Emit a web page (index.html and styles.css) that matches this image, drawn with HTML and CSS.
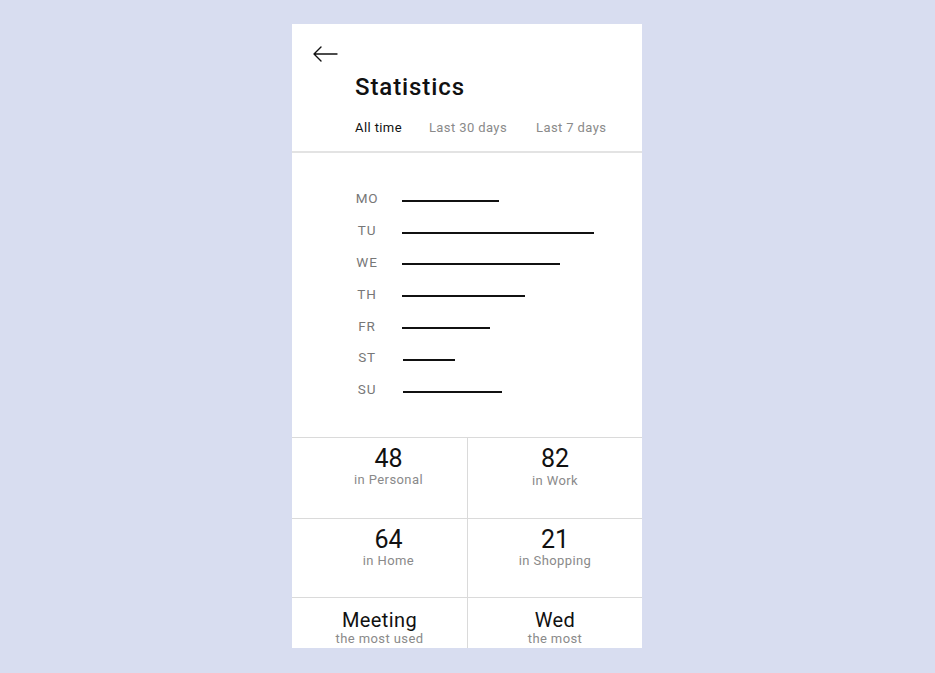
FILE: index.html
```html
<!DOCTYPE html>
<html>
<head>
<meta charset="utf-8">
<link rel="stylesheet" href="styles.css">
</head>
<body>
<div class="card">
  <header class="header">
    <svg class="back" width="28" height="20" viewBox="0 0 28 20">
      <path d="M26 10H3M10 3L3 10L10 17" fill="none" stroke="#111" stroke-width="1.4" stroke-linecap="round" stroke-linejoin="round"/>
    </svg>
    <h1 class="title">Statistics</h1>
    <nav class="tabs">
      <span class="tab active">All time</span>
      <span class="tab">Last 30 days</span>
      <span class="tab">Last 7 days</span>
    </nav>
  </header>
  <section class="chart">
    <div class="row"><span class="day">MO</span><span class="bar" style="width:97px"></span></div>
    <div class="row"><span class="day">TU</span><span class="bar" style="width:192px"></span></div>
    <div class="row"><span class="day">WE</span><span class="bar" style="width:158px"></span></div>
    <div class="row"><span class="day">TH</span><span class="bar" style="width:123px"></span></div>
    <div class="row"><span class="day">FR</span><span class="bar" style="width:88px"></span></div>
    <div class="row"><span class="day">ST</span><span class="bar shift" style="width:52px"></span></div>
    <div class="row"><span class="day">SU</span><span class="bar shift" style="width:99px"></span></div>
  </section>
  <section class="grid">
    <div class="cell r1 left"><div class="num">48</div><div class="lbl">in Personal</div></div>
    <div class="cell r1"><div class="num">82</div><div class="lbl low">in Work</div></div>
    <div class="cell r2 left"><div class="num">64</div><div class="lbl">in Home</div></div>
    <div class="cell r2"><div class="num">21</div><div class="lbl">in Shopping</div></div>
    <div class="cell r3"><div class="word">Meeting</div><div class="lbl tight">the most used</div></div>
    <div class="cell r3"><div class="word">Wed</div><div class="lbl tight">the most</div></div>
  </section>
</div>
</body>
</html>
```

FILE: styles.css
```css
* { box-sizing: border-box; }
html, body { margin: 0; padding: 0; }
body {
  background: #d8ddf0;
  font-family: Roboto, "Noto Sans", "Liberation Sans", sans-serif;
  width: 935px;
  height: 673px;
  overflow: hidden;
}
.card {
  margin: 24px 0 0 292px;
  width: 350px;
  height: 624px;
  background: #fff;
  overflow: hidden;
  display: flex;
  flex-direction: column;
}
.header {
  flex-shrink: 0;
  height: 129px;
  border-bottom: 2px solid #e3e3e3;
  padding: 20px 0 0 0;
  display: flex;
  flex-direction: column;
}
.back {
  margin-left: 19px;
  display: block;
}
.title {
  margin: 9px 0 0 63px;
  font-size: 24px;
  font-weight: 500;
  letter-spacing: 0.9px;
  line-height: 28px;
  color: #111;
}
.tabs {
  margin: 19px 0 0 63px;
  display: flex;
  gap: 27px;
  font-size: 13px;
  line-height: 16px;
  letter-spacing: 0.4px;
  color: #8a8a8a;
}
.tab.active { color: #111; }
.tabs .tab:last-child { margin-left: 2px; }

.chart {
  flex-shrink: 0;
  height: 284px;
  padding: 29.5px 0 0 0;
  display: flex;
  flex-direction: column;
}
.row {
  height: 31.8px;
  flex-shrink: 0;
  display: flex;
  align-items: center;
}
.day {
  width: 24px;
  margin-left: 63px;
  text-align: center;
  font-size: 13.5px;
  letter-spacing: 0.8px;
  color: #777;
}
.bar {
  height: 2px;
  background: #111;
  margin-left: 23px;
  margin-top: 5px;
}
.bar.shift { margin-left: 24px; }

.grid {
  flex-shrink: 0;
  display: grid;
  grid-template-columns: 176px 174px;
  grid-template-rows: 81px 79px 60px;
  border-top: 1px solid #dadada;
}
.cell {
  display: flex;
  flex-direction: column;
  align-items: center;
  padding-top: 7px;
  border-bottom: 1px solid #dadada;
}
.cell:nth-child(odd) { border-right: 1px solid #dadada; }
.cell.left { padding-left: 18px; }
.cell.r3 { padding-top: 10px; border-bottom: none; }
.num {
  font-size: 25px;
  line-height: 28px;
  color: #111;
}
.word {
  font-size: 20px;
  line-height: 24px;
  letter-spacing: 0.4px;
  color: #111;
}
.lbl {
  font-size: 13px;
  line-height: 16px;
  letter-spacing: 0.4px;
  color: #8a8a8a;
  margin-top: -1px;
}
.lbl.low { margin-top: 0; }
.lbl.tight { margin-top: -1px; }
```
